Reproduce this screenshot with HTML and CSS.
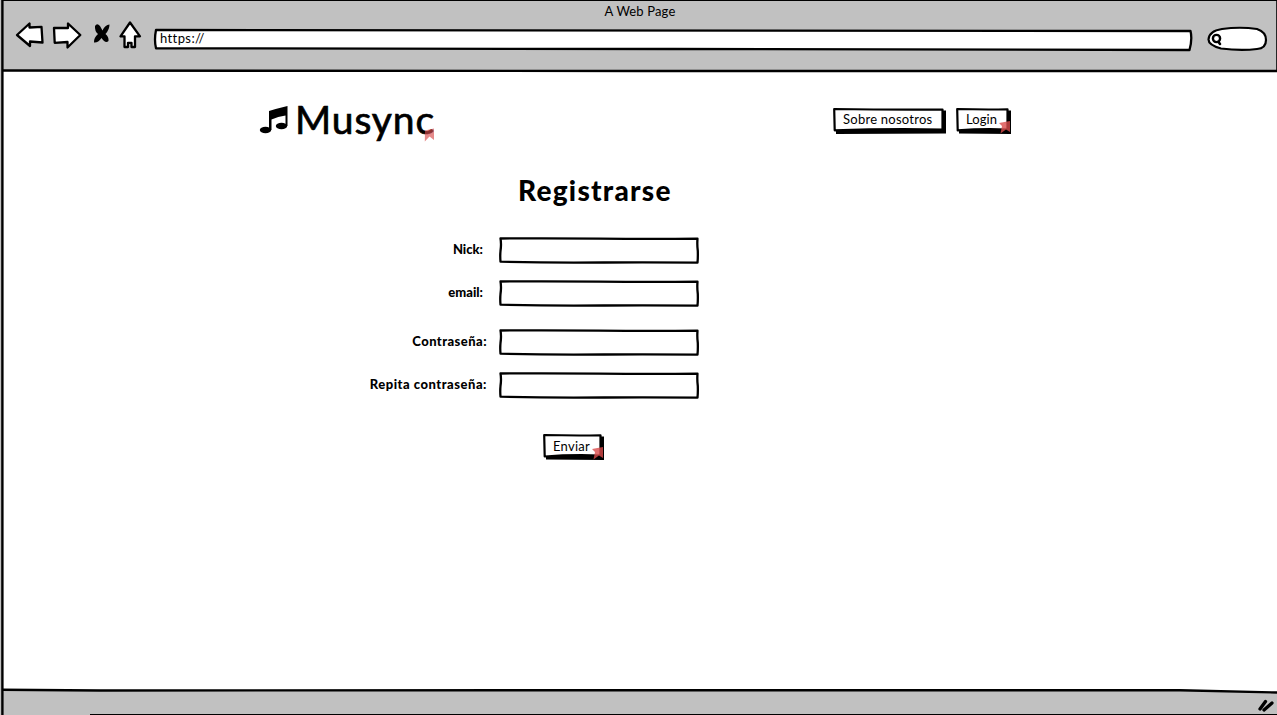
FILE: index.html
```html
<!DOCTYPE html>
<html lang="es">
<head>
<meta charset="utf-8">
<title>Musync - Registrarse</title>
<link rel="stylesheet" href="styles.css">
</head>
<body>
<svg class="defs" width="0" height="0" aria-hidden="true">
  <symbol id="field" viewBox="0 0 201 28">
    <path fill="#fff" stroke="#000" stroke-width="2.3" stroke-linejoin="round" d="M1.500 1.500Q50 1 100 1.700Q155 2.100 198.500 1.700Q198 8 198.800 14Q199 21 198.500 25.700Q150 25 105 25.500Q50 26 1.500 24.700Q1 19 1.500 14Q2.500 7 1.500 1.500Z"/>
  </symbol>
</svg>
<div class="browser">
  <header class="chrome">
    <svg class="edge" viewBox="0 0 1277 71" aria-hidden="true">
      <path class="line" d="M0 .5H1277M1276.800 1V71"/>
      <path class="line thick" d="M2 70.500Q320 71 640 71T1277 71"/>
    </svg>
    <div class="title">A Web Page</div>
    <div class="toolbar">
      <svg class="nav" width="128" height="30" viewBox="0 0 128 30">
        <g fill="#fff" stroke="#000" stroke-width="2.300" stroke-linejoin="round">
          <path d="M2 15L14.500 3.500V7.500L26.500 6.800L27.500 22.500L15 21.500V26Z"/>
          <path d="M65.300 15L53 3.500V8L39 8L39.700 22.800L52.500 22V27.500Z"/>
          <path d="M115 2.500L105.500 16.300H109.500V27H113V22.800H116.500V27H120V16.300H125Z"/>
        </g>
        <path d="M80 6Q82 2.500 85 6L87.500 10.500Q90 5 94.500 4.500Q94.500 9.500 90.500 14Q94 17 93.500 21Q90.500 24 86.500 18Q83 23 79 22.500Q78.500 18 83 14Q79.500 11 80 6Z"/>
      </svg>
      <div class="address">
        <svg class="edge" viewBox="0 0 1040 23"><path fill="#fff" stroke="#000" stroke-width="2.300" stroke-linejoin="round" d="M3 1Q500 .4 1037.500 2Q1039.500 10 1036.500 21L520 20L3 19.300Q1 11 3 1Z"/></svg>
        <span class="url">https://</span>
      </div>
      <svg class="search" width="62" height="28" viewBox="0 0 62 28">
        <path fill="#fff" stroke="#000" stroke-width="2.200" d="M15 4Q33 1.500 50 4Q59 7 59 15Q59 23.500 50 24Q34 26 14 23.500Q1.500 20 1.500 14.500Q2 6 15 4Z"/>
        <circle cx="9.500" cy="13.500" r="3.600" fill="none" stroke="#000" stroke-width="2.400"/>
        <path stroke="#000" stroke-width="2.600" stroke-linecap="round" d="M11.500 17L13 19"/>
      </svg>
    </div>
  </header>
  <main class="page">
    <div class="masthead">
      <div class="logo">
        <svg width="32" height="34" viewBox="0 0 32 34"><ellipse cx="6.500" cy="28" rx="5.700" ry="3.300"/><ellipse cx="22.500" cy="24" rx="5.700" ry="3.300"/><path d="M10 9Q18 6.500 28.500 4V24H26.500V13.500Q19 14.500 12.500 17.500V28H10Z"/></svg>
        <span class="brand">Musync</span>
        <svg class="flag" width="11" height="14" viewBox="0 0 11 14"><path fill="#d94b4b" fill-opacity=".65" d="M1 2.500L10 .5V12L5.500 8.500L.8 13.500Z"/></svg>
      </div>
      <nav class="links">
        <a class="button about">
          <svg class="edge" viewBox="0 0 113 26"><path d="M3 2.500H113V25.500L3 26Z"/><path class="face" d="M1.200 1Q55 1.800 109.500 1.500V21.500Q55 20.500 1.700 22.300Z"/></svg>
          <span>Sobre nosotros</span>
        </a>
        <a class="button login">
          <svg class="edge" viewBox="0 0 55 26"><path d="M3 2.500H55V26L3 25.500Z"/><path class="face" d="M1.200 1Q27 1.800 51.500 1.300V21.500Q27 20.500 1.700 22.300Z"/></svg>
          <span>Login</span>
          <svg class="flag" width="13" height="14" viewBox="0 0 13 14"><path fill="#d94b4b" fill-opacity=".8" d="M1 3L12 1V12L8 9.500L2.500 13.500L4 6Z"/></svg>
        </a>
      </nav>
    </div>
    <h1>Registrarse</h1>
    <form>
      <div class="row"><label class="nick"><span>Nick:</span></label><svg class="input"><use href="#field"/></svg></div>
      <div class="row"><label class="email"><span>email:</span></label><svg class="input"><use href="#field"/></svg></div>
      <div class="row password"><label class="pass"><span>Contraseña:</span></label><svg class="input"><use href="#field"/></svg></div>
      <div class="row"><label class="repeat"><span>Repita contraseña:</span></label><svg class="input"><use href="#field"/></svg></div>
      <a class="button send">
        <svg class="edge" viewBox="0 0 61 26"><path d="M3 2.500H61V26L3 25.500Z"/><path class="face" d="M1.200 1Q30 1.800 57.500 1.300V21.500Q28 20.500 1.700 22.500Z"/></svg>
        <span>Enviar</span>
        <svg class="flag" width="13" height="14" viewBox="0 0 13 14"><path fill="#d94b4b" fill-opacity=".8" d="M1 3L12 1V12L8 9.500L2.500 13.500L4 6Z"/></svg>
      </a>
    </form>
  </main>
  <footer class="status">
    <svg class="edge" viewBox="0 0 1277 26"><path fill="#c1c1c1" d="M2 1.500H1180L1277 3.500V26H2Z"/><path class="line thick" d="M2 .800L100 1.500L640 1.200L1180 1.300L1277 3.500"/><path class="line" d="M90 25.600H1277"/><path stroke="#000" stroke-width="3.300" stroke-linecap="round" d="M1260 20L1265.500 12.500M1264 21L1272 14"/></svg>
  </footer>
  <svg class="side" width="4" height="715" viewBox="0 0 4 715"><path fill="#c1c1c1" d="M0 0H2V715H0Z"/><path class="line thick" d="M2.400 0V715"/></svg>
</div>
</body>
</html>
```
FILE: styles.css
```css
* { box-sizing: border-box; }
body { margin: 0; overflow: hidden; background: #fff; color: #000; font: 13px/20px Lato, "Noto Sans", sans-serif; }
svg { display: block; overflow: visible; flex: none; }
.defs { position: absolute; }
.browser { position: relative; display: flex; flex-direction: column; height: 715px; }
.edge { position: absolute; inset: 0; width: 100%; height: 100%; }
.side { position: absolute; left: 0; top: 0; }
.line { fill: none; stroke: #000; stroke-width: 1.2; }
.thick { stroke-width: 2.4; }
.chrome { position: relative; height: 71px; background: #c1c1c1; }
.title { position: relative; height: 20px; padding: 1px 0 0 3px; text-align: center; letter-spacing: .15px; }
.toolbar { position: relative; display: flex; align-items: flex-start; padding-left: 15px; }
.nav { margin-right: 10px; }
.address { position: relative; width: 1040px; height: 23px; margin-top: 9px; padding-left: 7px; }
.url { position: relative; display: block; line-height: 19px; letter-spacing: .4px; }
.search { margin: 5px 0 0 14px; }
.page { flex: 1; }
.masthead { display: flex; padding: 31px 0 0 259px; height: 84px; }
.logo { position: relative; display: flex; width: 180px; height: 45px; }
.brand { margin: -5px 0 0 4px; font-size: 39px; line-height: 45px; letter-spacing: .9px; -webkit-text-stroke: .7px #000; }
.logo .flag { position: absolute; left: 165px; top: 26px; width: 11px; height: 14px; }
.links { display: flex; gap: 10px; margin: 6px 0 0 394px; }
.button { position: relative; display: block; height: 26px; }
.button > span { position: relative; display: block; padding-left: 10px; line-height: 23px; white-space: nowrap; }
.face { fill: #fff; stroke: #000; stroke-width: 2.2; stroke-linejoin: round; }
.button .flag { position: absolute; right: 0; bottom: 0; }
.about { width: 113px; letter-spacing: .25px; }
.login { width: 55px; letter-spacing: .1px; }
h1 { margin: 19px 0 0 518px; font-size: 28px; line-height: 32px; font-weight: 900; letter-spacing: 1.25px; }
form { padding-top: 31px; }
.row { display: flex; height: 27px; margin-bottom: 16px; }
.row.password { margin-top: 22px; }
label { width: 499px; text-align: right; font-weight: 900; line-height: 24px; }
.input { width: 201px; height: 28px; }
.nick { padding-right: 16px; }
.email { padding-right: 16px; }
.pass { padding-right: 12px; letter-spacing: .45px; }
.repeat { padding-right: 12px; letter-spacing: .52px; }
.send { width: 61px; margin: 35px 0 0 543px; letter-spacing: .25px; }
.send > span { line-height: 25px; }
.status { position: relative; height: 26px; }
```
